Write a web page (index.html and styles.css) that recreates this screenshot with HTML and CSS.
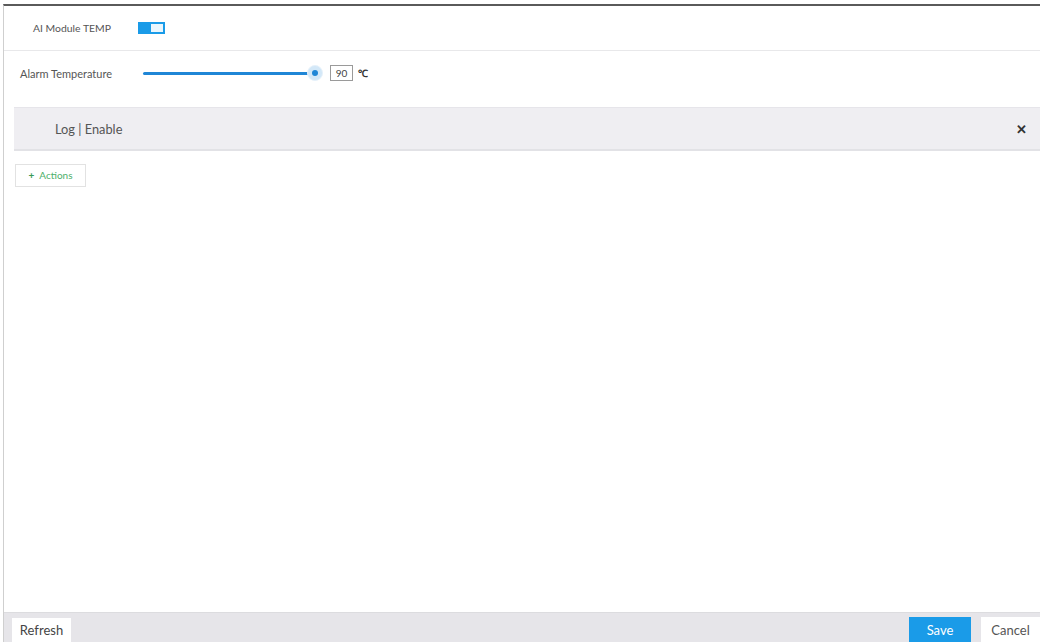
FILE: index.html
```html
<!DOCTYPE html>
<html>
<head>
<meta charset="utf-8">
<link rel="stylesheet" href="styles.css">
</head>
<body>
<div class="frame">
  <div class="row row-top">
    <span class="label label-ai">AI Module TEMP</span>
    <span class="toggle"><span class="toggle-on"></span><span class="toggle-knob"></span></span>
  </div>
  <div class="row row-slider">
    <span class="label label-alarm">Alarm Temperature</span>
    <span class="slider"><span class="track"></span><span class="knob"><span class="knob-dot"></span></span></span>
    <span class="numbox">90</span>
    <span class="unit">℃</span>
  </div>
  <div class="panel">
    <span class="panel-title">Log | Enable</span>
    <span class="close">&#x2715;</span>
  </div>
  <div class="actions-row">
    <button class="actions-btn"><span class="plus">+</span>Actions</button>
  </div>
  <div class="spacer"></div>
  <div class="footer">
    <button class="btn btn-refresh">Refresh</button>
    <div class="footer-right">
      <button class="btn btn-save">Save</button>
      <button class="btn btn-cancel">Cancel</button>
    </div>
  </div>
</div>
</body>
</html>
```
FILE: styles.css
```css
html, body {
  margin: 0;
  padding: 0;
  background: #ffffff;
  width: 1042px;
  height: 642px;
  overflow: hidden;
  font-family: Lato, "Open Sans", "Liberation Sans", sans-serif;
  color: #444;
}
.frame {
  margin: 4px 0 0 3px;
  width: 1036px;
  height: 636px;
  border-top: 2px solid #5a5a5a;
  border-left: 1px solid #cfcfcf;
  display: flex;
  flex-direction: column;
}
.row {
  display: flex;
  align-items: center;
}
.row-top {
  height: 44px;
  border-bottom: 1px solid #e8e8ea;
  padding-left: 29px;
}
.label {
  color: #555;
}
.label-ai {
  width: 105px;
  font-size: 10.4px;
}
.label-alarm {
  width: 123px;
  font-size: 11px;
}
.toggle {
  display: flex;
  width: 27px;
  height: 12px;
  border: 1px solid #1a9be8;
  box-sizing: border-box;
  background: #1a9be8;
}
.toggle-on {
  width: 12px;
  height: 100%;
}
.toggle-knob {
  flex: 1;
  background: #e9f6fd;
  margin: 1px 1px 1px 0;
}
.row-slider {
  height: 44px;
  padding-left: 16px;
}
.slider {
  position: relative;
  display: flex;
  align-items: center;
  width: 180px;
  height: 16px;
}
.track {
  width: 172px;
  height: 3px;
  background: #1f86d6;
  border-radius: 2px;
}
.knob {
  position: absolute;
  left: 164px;
  top: 0;
  width: 16px;
  height: 16px;
  border-radius: 50%;
  background: #d3e8f8;
  border: 1px solid #e6f1fa;
  box-sizing: border-box;
  display: flex;
  align-items: center;
  justify-content: center;
}
.knob-dot {
  width: 6px;
  height: 6px;
  border-radius: 50%;
  background: #1f86d6;
}
.numbox {
  margin-left: 7px;
  width: 23px;
  height: 16px;
  border: 1px solid #9a9a9a;
  box-sizing: border-box;
  font-size: 10px;
  line-height: 14px;
  text-align: center;
  color: #444;
}
.unit {
  margin-left: 5px;
  font-size: 10px;
  font-weight: bold;
  color: #333;
}
.panel {
  margin: 12px 0 0 10px;
  height: 44px;
  background: #efeef2;
  border-top: 1px solid #e6e5ea;
  border-bottom: 2px solid #e2e2e6;
  box-sizing: border-box;
  display: flex;
  align-items: center;
  justify-content: space-between;
  padding: 0 13px 0 41px;
}
.panel-title {
  font-size: 12.8px;
  color: #555;
}
.close {
  font-size: 13px;
  font-weight: bold;
  color: #333;
}
.actions-row {
  padding: 12px 0 0 11px;
}
.actions-btn {
  width: 71px;
  height: 23px;
  background: #fff;
  border: 1px solid #e2e2e2;
  font-family: Lato, "Open Sans", "Liberation Sans", sans-serif;
  font-size: 10px;
  color: #4caf6a;
  padding: 0;
}
.plus {
  font-weight: bold;
  color: #3a9a57;
  margin-right: 5px;
}
.spacer {
  flex: 1;
}
.footer {
  height: 29px;
  background: #e6e5e9;
  border-top: 1px solid #dcdcdf;
  display: flex;
  align-items: flex-end;
  justify-content: space-between;
  padding: 0 0 0 8px;
}
.footer-right {
  display: flex;
  gap: 10px;
}
.btn {
  height: 25px;
  border: none;
  font-family: Lato, "Open Sans", "Liberation Sans", sans-serif;
  font-size: 13px;
  padding: 0;
}
.btn-refresh {
  width: 59px;
  background: #ffffff;
  color: #444;
  height: 24px;
}
.btn-save {
  width: 62px;
  background: #1a9be8;
  color: #ffffff;
}
.btn-cancel {
  width: 59px;
  background: #ffffff;
  color: #555;
}
```
